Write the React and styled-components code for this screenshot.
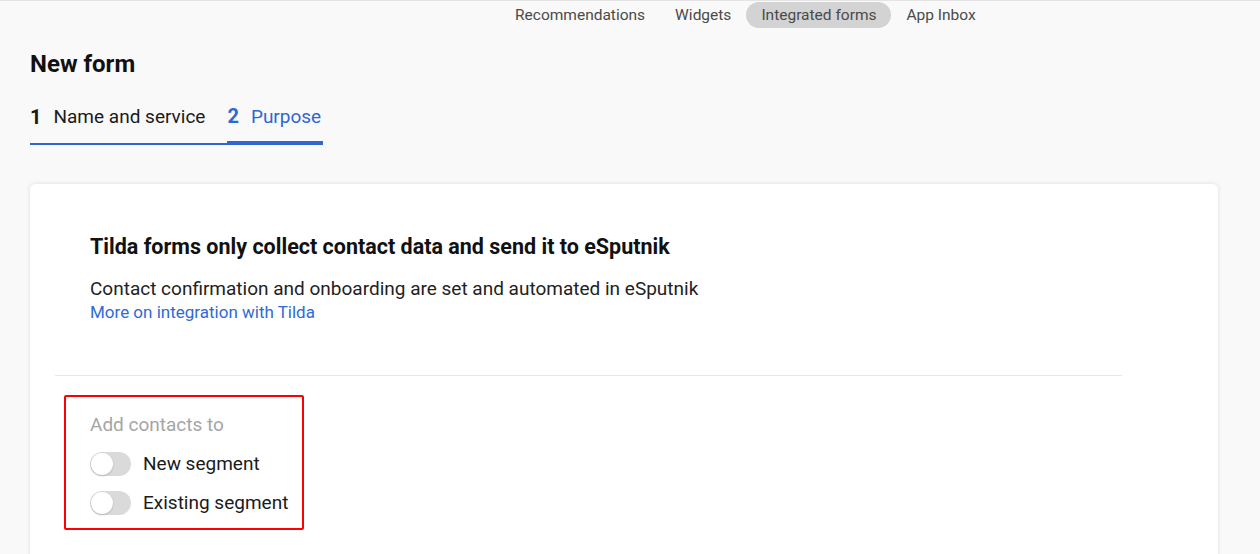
import React from "react";
import styled, { createGlobalStyle } from "styled-components";

const Global = createGlobalStyle`
  html, body { margin: 0; padding: 0; background: #f9f9f9; }
  body { font-family: Roboto, "Liberation Sans", sans-serif; color: #1a1a1a; overflow: hidden; }
  * { box-sizing: border-box; }
`;

const Page = styled.div`
  width: 1260px;
  height: 554px;
  border-top: 1px solid #e4e4e4;
  overflow: hidden;
`;

const TopNav = styled.nav`
  display: flex;
  align-items: center;
  height: 26px;
  padding-left: 500px;
  margin-top: 1px;
`;

const NavItem = styled.div`
  height: 26px;
  padding: 0 15px;
  display: flex;
  align-items: center;
  font-size: 15.5px;
  color: #4a4a4a;
  border-radius: 13px;
  background: ${(p) => (p.$active ? "#d3d3d3" : "transparent")};
`;

const Content = styled.div`
  padding: 22px 30px 0 30px;
`;

const Title = styled.h1`
  margin: 0;
  font-size: 24px;
  font-weight: 700;
  line-height: 28px;
  color: #111;
`;

const Tabs = styled.div`
  display: flex;
  margin-top: 23px;
`;

const Tab = styled.div`
  display: flex;
  align-items: center;
  gap: 12px;
  height: 44px;
  padding-right: ${(p) => p.$pr}px;
  border-bottom: ${(p) => (p.$active ? "4px" : "2px")} solid #2f67d2;
  margin-bottom: ${(p) => (p.$active ? "0" : "1px")};
  padding-bottom: ${(p) => (p.$active ? "10px" : "11px")};
  color: ${(p) => (p.$active ? "#2f67d2" : "#1a1a1a")};
`;

const TabNum = styled.span`
  font-size: 20px;
  font-weight: 700;
`;

const TabLabel = styled.span`
  font-size: 19px;
`;

const Card = styled.div`
  margin-top: 38px;
  width: 1188px;
  height: 400px;
  background: #fff;
  border-radius: 5px;
  box-shadow: 0 0 4px rgba(0, 0, 0, 0.12);
  padding: 50px 96px 0 25px;
`;

const Intro = styled.div`
  padding-left: 35px;
  padding-bottom: 51px;
  border-bottom: 1px solid #e8e8e8;
`;

const Heading = styled.h2`
  margin: 0;
  font-size: 21.5px;
  font-weight: 700;
  line-height: 26px;
  color: #111;
`;

const Para = styled.p`
  margin: 17px 0 0 0;
  font-size: 19px;
  line-height: 23px;
  color: #222;
`;

const Link = styled.a`
  display: block;
  font-size: 17px;
  line-height: 24px;
  color: #2f6ad6;
  text-decoration: none;
`;

const Highlight = styled.div`
  margin-top: 19px;
  margin-left: 9px;
  width: 240px;
  border: 2px solid #ff0000;
  border-radius: 2px;
  padding: 16px 0 6px 24px;
`;

const GroupLabel = styled.div`
  font-size: 19px;
  line-height: 24px;
  color: #a5a5a5;
  margin-bottom: 7px;
`;

const ToggleRow = styled.div`
  display: flex;
  align-items: center;
  gap: 12px;
  height: 39px;
`;

const Track = styled.span`
  position: relative;
  width: 41px;
  height: 24px;
  border-radius: 12px;
  background: #dadada;
  flex: none;
`;

const Thumb = styled.span`
  position: absolute;
  left: 1px;
  top: 1px;
  width: 22px;
  height: 22px;
  border-radius: 50%;
  background: #fff;
  box-shadow: 0 1px 2px rgba(0, 0, 0, 0.18);
`;

const ToggleLabel = styled.span`
  font-size: 19px;
  color: #1a1a1a;
`;

function Toggle({ label }) {
  return (
    <ToggleRow>
      <Track>
        <Thumb />
      </Track>
      <ToggleLabel>{label}</ToggleLabel>
    </ToggleRow>
  );
}

export default function App() {
  return (
    <>
      <Global />
      <Page>
        <TopNav>
          <NavItem>Recommendations</NavItem>
          <NavItem>Widgets</NavItem>
          <NavItem $active>Integrated forms</NavItem>
          <NavItem>App Inbox</NavItem>
        </TopNav>
        <Content>
          <Title>New form</Title>
          <Tabs>
            <Tab $pr={22}>
              <TabNum>1</TabNum>
              <TabLabel>Name and service</TabLabel>
            </Tab>
            <Tab $active $pr={2}>
              <TabNum>2</TabNum>
              <TabLabel>Purpose</TabLabel>
            </Tab>
          </Tabs>
          <Card>
            <Intro>
              <Heading>Tilda forms only collect contact data and send it to eSputnik</Heading>
              <Para>Contact confirmation and onboarding are set and automated in eSputnik</Para>
              <Link>More on integration with Tilda</Link>
            </Intro>
            <Highlight>
              <GroupLabel>Add contacts to</GroupLabel>
              <Toggle label="New segment" />
              <Toggle label="Existing segment" />
            </Highlight>
          </Card>
        </Content>
      </Page>
    </>
  );
}
